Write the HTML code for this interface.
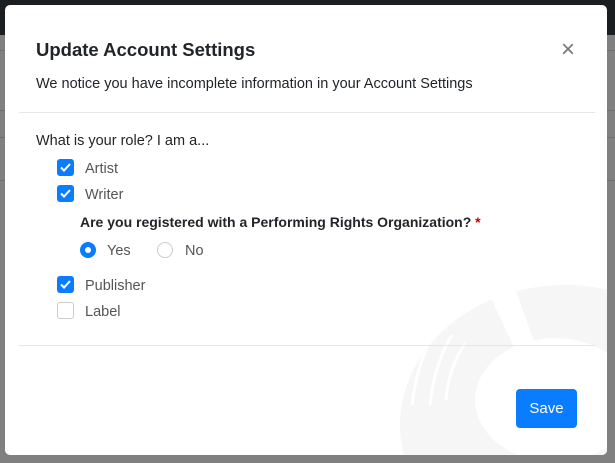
<!DOCTYPE html>
<html><head><style>
*{margin:0;padding:0;box-sizing:border-box}
html,body{width:615px;height:463px;overflow:hidden}
body{background:#808080;font-family:"Liberation Sans",sans-serif;position:relative;color:#212529}
.top{position:absolute;left:0;top:0;width:615px;height:35px;background:#1b1e21}
.gl{position:absolute;left:0;width:615px;height:1px;background:#6f6f6f}
.modal{position:absolute;left:5px;top:5px;width:602px;height:450px;background:#fff;border-radius:5px;overflow:hidden}
.t{position:absolute;white-space:nowrap}
.cb{position:absolute;width:17px;height:17px;border-radius:3px;background:#0a7cff}
.cb svg{position:absolute;left:2px;top:2px}
.cb.off{background:#fff;border:1px solid #ccc}
.hr{position:absolute;height:1px;background:#e6e6e6}
.l{font-size:14.5px;color:#555}
</style></head><body>
<div class="top"></div>
<div class="gl" style="top:50px"></div>
<div class="gl" style="top:110px"></div>
<div class="gl" style="top:137px"></div>
<div class="gl" style="top:180px"></div>
<div class="modal">
<svg style="position:absolute;left:385px;top:270px" width="217" height="180" viewBox="0 0 217 180">
<ellipse cx="175" cy="150" rx="165" ry="140" fill="#f6f6f6"/>
<ellipse cx="165" cy="125" rx="80" ry="62" fill="#fff"/>
<path d="M88 -5 L118 -5 L175 150 L160 150Z" fill="#fff"/>
<path d="M50 50 Q28 80 22 130 M62 60 Q44 90 40 130 M75 68 Q58 95 56 125" stroke="#fff" stroke-width="3" fill="none"/>
</svg>
<div class="t" style="left:31px;top:34px;font-size:18.5px;font-weight:bold;color:#212529">Update Account Settings</div>
<div class="t" style="left:556px;top:31px;font-size:24px;color:#777;font-weight:300">×</div>
<div class="t" style="left:31px;top:71px;font-size:14.5px">We notice you have incomplete information in your Account Settings</div>
<div class="hr" style="left:14px;top:107px;width:576px"></div>
<div class="t" style="left:31px;top:128px;font-size:14.5px">What is your role? I am a...</div>
<div class="cb" style="left:52px;top:154px"><svg width="13" height="13"><path d="M2 6.5 L5 9.5 L11 3" stroke="#fff" stroke-width="2" fill="none"/></svg></div>
<div class="t l" style="left:80px;top:156px">Artist</div>
<div class="cb" style="left:52px;top:180px"><svg width="13" height="13"><path d="M2 6.5 L5 9.5 L11 3" stroke="#fff" stroke-width="2" fill="none"/></svg></div>
<div class="t l" style="left:80px;top:182px">Writer</div>
<div class="t" style="left:75px;top:209px;font-size:14px;font-weight:bold">Are you registered with a Performing Rights Organization? <span style="color:#c00">*</span></div>
<div style="position:absolute;left:75px;top:237px;width:16px;height:16px;border-radius:50%;background:#0a7cff"><div style="position:absolute;left:5px;top:5px;width:6px;height:6px;border-radius:50%;background:#fff"></div></div>
<div class="t l" style="left:102px;top:238px">Yes</div>
<div style="position:absolute;left:152px;top:237px;width:16px;height:16px;border-radius:50%;border:1px solid #ccc"></div>
<div class="t l" style="left:180px;top:238px">No</div>
<div class="cb" style="left:52px;top:271px"><svg width="13" height="13"><path d="M2 6.5 L5 9.5 L11 3" stroke="#fff" stroke-width="2" fill="none"/></svg></div>
<div class="t l" style="left:80px;top:273px">Publisher</div>
<div class="cb off" style="left:52px;top:297px"></div>
<div class="t l" style="left:80px;top:299px">Label</div>
<div class="hr" style="left:14px;top:340px;width:576px"></div>
<div style="position:absolute;left:511px;top:384px;width:61px;height:39px;background:#0a7cff;border-radius:4px;color:#fff;font-size:15px;text-align:center;line-height:40px">Save</div>
</div>
</body></html>
